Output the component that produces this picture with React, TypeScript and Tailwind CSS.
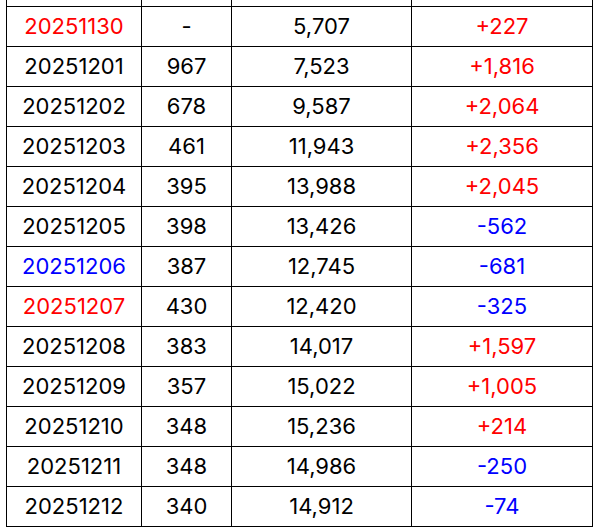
const rows: { date: string; count: string; total: string; diff: string; dateColor?: string }[] = [
  { date: "20251130", count: "-", total: "5,707", diff: "+227", dateColor: "text-[#ff0000]" },
  { date: "20251201", count: "967", total: "7,523", diff: "+1,816" },
  { date: "20251202", count: "678", total: "9,587", diff: "+2,064" },
  { date: "20251203", count: "461", total: "11,943", diff: "+2,356" },
  { date: "20251204", count: "395", total: "13,988", diff: "+2,045" },
  { date: "20251205", count: "398", total: "13,426", diff: "-562" },
  { date: "20251206", count: "387", total: "12,745", diff: "-681", dateColor: "text-[#0000ff]" },
  { date: "20251207", count: "430", total: "12,420", diff: "-325", dateColor: "text-[#ff0000]" },
  { date: "20251208", count: "383", total: "14,017", diff: "+1,597" },
  { date: "20251209", count: "357", total: "15,022", diff: "+1,005" },
  { date: "20251210", count: "348", total: "15,236", diff: "+214" },
  { date: "20251211", count: "348", total: "14,986", diff: "-250" },
  { date: "20251212", count: "340", total: "14,912", diff: "-74" },
];

export default function App() {
  return (
    <div className="w-[598px] h-[531px] overflow-hidden bg-white font-['Inter',sans-serif] text-[22px] text-black">
      <table className="-mt-[34px] ml-[6px] w-[587px] table-fixed border-collapse">
        <colgroup>
          <col className="w-[135px]" />
          <col className="w-[90px]" />
          <col className="w-[180px]" />
          <col className="w-[181px]" />
        </colgroup>
        <tbody>
          {/* row above, scrolled out of view */}
          <tr className="h-[40px]">
            <td className="border border-black"></td>
            <td className="border border-black"></td>
            <td className="border border-black"></td>
            <td className="border border-black"></td>
          </tr>
          {rows.map((r) => (
            <tr key={r.date} className="h-[40px]">
              <td className={`border border-black text-center ${r.dateColor ?? ""}`}>{r.date}</td>
              <td className="border border-black text-center">{r.count}</td>
              <td className="border border-black text-center">{r.total}</td>
              <td
                className={`border border-black text-center ${
                  r.diff.startsWith("+") ? "text-[#ff0000]" : "text-[#0000ff]"
                }`}
              >
                {r.diff}
              </td>
            </tr>
          ))}
        </tbody>
      </table>
    </div>
  );
}
